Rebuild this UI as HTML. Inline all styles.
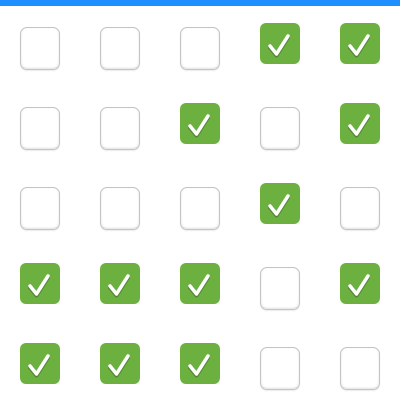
<!DOCTYPE html>
<html><head><style>
html,body{margin:0;padding:0;background:#fff;width:400px;height:400px;overflow:hidden}
.bar{position:absolute;left:0;top:0;width:400px;height:6px;background:#1e8fff}
.b{position:absolute;width:38px;height:41px;border:1px solid #c4c4c4;border-radius:7px;box-shadow:inset 0 -1px 2px rgba(0,0,0,.12),0 1px 1px rgba(0,0,0,.08);background:#fff}
.c{position:absolute;width:40px;height:41px;border-radius:6px;background:#6cb040}
.c svg{position:absolute;left:0;top:0}
</style></head><body>
<div class="bar"></div>
<div id="g"></div>
<script>
var m=["00011","00101","00010","11101","11100"],h="";
for(var r=0;r<5;r++)for(var c=0;c<5;c++){var x=20+c*80,y=27+r*80;
if(m[r][c]=="1")h+='<div class="c" style="left:'+x+'px;top:'+(y-4)+'px"><svg width="40" height="41"><path d="M10 23 L16.5 31 L28 13" fill="none" stroke="rgba(0,0,0,.25)" stroke-width="4" stroke-linecap="round" stroke-linejoin="round" transform="translate(0,1.5)"/><path d="M10 23 L16.5 31 L28 13" fill="none" stroke="#fff" stroke-width="3.5" stroke-linecap="round" stroke-linejoin="round"/></svg></div>';
else h+='<div class="b" style="left:'+x+'px;top:'+y+'px"></div>';}
document.getElementById("g").innerHTML=h;
</script>
</body></html>
